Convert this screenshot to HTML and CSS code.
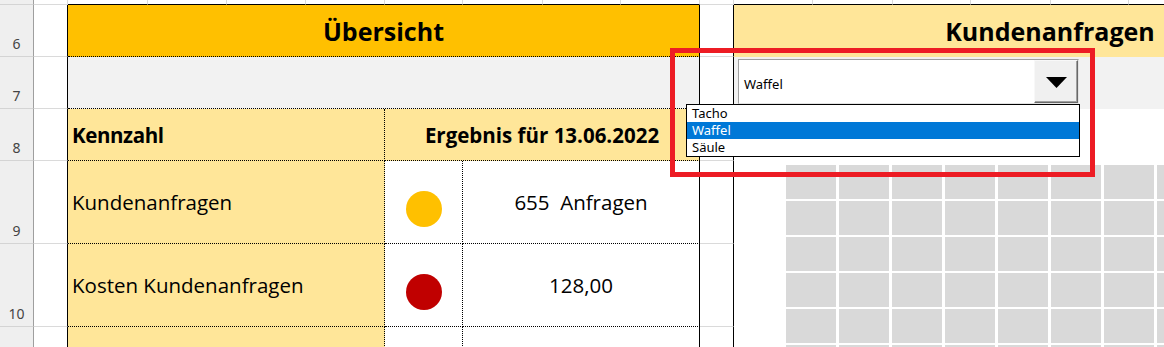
FILE: index.html
```html
<!DOCTYPE html>
<html lang="de">

<head>
    <meta charset="utf-8">
    <title>Übersicht</title>
    <link rel="stylesheet" href="styles.css">
</head>

<body>
    <div class="sheet">
        <!-- row 5 (cut off) -->
        <div class="rh"></div>
        <div class="cell"></div>
        <div class="cell edge"></div>
        <div class="cell edge"></div>
        <div class="cell edge"></div>
        <div class="cell edge"></div>
        <div class="cell edge"></div>
        <div class="cell edge"></div>
        <div class="cell edge"></div>
        <div class="cell edge"></div>
        <div class="cell"></div>
        <div class="cell edge"></div>
        <div class="cell edge"></div>
        <div class="cell edge"></div>
        <div class="cell edge"></div>
        <div class="cell edge"></div>
        <div class="cell edge"></div>
        <div class="cell edge"></div>
        <div class="cell edge"></div>

        <!-- row 6 -->
        <div class="rh">6</div>
        <div class="cell gutter"></div>
        <div class="cell title span-8">Übersicht</div>
        <div class="cell gutter"></div>
        <div class="cell panel-title span-8">Kundenanfragen</div>

        <!-- row 7 -->
        <div class="rh">7</div>
        <div class="cell gutter"></div>
        <div class="cell filter span-8"></div>
        <div class="cell gutter"></div>
        <div class="cell panel-filter span-8">
            <div class="combo">
                <div class="combo-value">Waffel</div>
                <div class="combo-btn">
                    <svg width="21" height="11" viewBox="0 0 21 11"><polygon points="0,0 21,0 10.5,11" fill="#000"/></svg>
                </div>
                <ul class="combo-list">
                    <li>Tacho</li>
                    <li class="selected">Waffel</li>
                    <li>Säule</li>
                </ul>
            </div>
        </div>

        <!-- row 8 -->
        <div class="rh">8</div>
        <div class="cell gutter"></div>
        <div class="cell head label span-4">Kennzahl</div>
        <div class="cell head result span-4">Ergebnis für 13.06.2022</div>
        <div class="cell gutter"></div>
        <div class="cell chart span-8">
            <div class="waffle" id="waffle"></div>
        </div>

        <!-- row 9 -->
        <div class="rh">9</div>
        <div class="cell gutter"></div>
        <div class="cell label span-4">Kundenanfragen</div>
        <div class="cell light"><span class="dot yellow"></span></div>
        <div class="cell value span-3">655  Anfragen</div>
        <div class="cell gutter"></div>

        <!-- row 10 -->
        <div class="rh">10</div>
        <div class="cell gutter"></div>
        <div class="cell label span-4">Kosten Kundenanfragen</div>
        <div class="cell light"><span class="dot red"></span></div>
        <div class="cell value span-3">128,00</div>
        <div class="cell gutter"></div>

        <!-- row 11 (cut off, number below the edge) -->
        <div class="rh"></div>
        <div class="cell gutter"></div>
        <div class="cell label span-4"></div>
        <div class="cell light"></div>
        <div class="cell value span-3"></div>
        <div class="cell gutter"></div>

        <div class="annotation"></div>
    </div>

    <script>
        const waffle = document.getElementById('waffle');
        for (let i = 0; i < 100; i++) {
            const box = document.createElement('div');
            box.className = 'waffle-box';
            waffle.appendChild(box);
        }
    </script>
</body>

</html>
```

FILE: styles.css
```css
* {
    margin: 0;
    padding: 0;
    box-sizing: border-box;
}

html,
body {
    overflow: hidden;
    background: #ffffff;
}

body {
    font-family: 'Open Sans', sans-serif;
    color: #000;
}

.sheet {
    position: relative;
    display: grid;
    grid-template-columns: 34px 34px 80px 79px 79px 79px 78px 80px 78px 79px 34px 79px 80px 78px 80px 78px 79px 79px 79px;
    grid-template-rows: 5px 52px 52px 52px 83px 83px 21px;
    width: 1164px;
    height: 347px;
    overflow: hidden;
}

.rh {
    background: #efefef;
    border-right: 1px solid #9f9f9f;
    border-bottom: 1px solid #d4d4d4;
    display: flex;
    align-items: flex-end;
    justify-content: center;
    padding-bottom: 3px;
    font-family: 'Noto Sans', sans-serif;
    font-size: 14px;
    color: #444;
}

.cell {
    border-right: 1px solid #dadada;
    border-bottom: 1px solid #dadada;
}

.cell.edge {
    border-bottom-color: #000;
}

.cell.gutter {
    border-right-color: #000;
}

.span-3 {
    grid-column: span 3;
}

.span-4 {
    grid-column: span 4;
}

.span-8 {
    grid-column: span 8;
}

.title {
    background: #ffc000;
    border-right-color: #000;
    border-bottom: 1px dotted #000;
    display: flex;
    align-items: center;
    justify-content: center;
    font-size: 25px;
    font-weight: 700;
}

.panel-title {
    background: #ffe699;
    border-right: none;
    border-bottom-color: #ffe699;
    display: flex;
    align-items: center;
    justify-content: center;
    font-size: 25px;
    font-weight: 700;
    white-space: nowrap;
}

.filter {
    background: #f2f2f2;
    border-right-color: #000;
    border-bottom: 1px dotted #000;
}

.panel-filter {
    background: #f2f2f2;
    border-right: none;
    border-bottom-color: #f2f2f2;
    padding: 2px 0 0 4px;
}

.label,
.result,
.value,
.light {
    display: flex;
    align-items: center;
    font-size: 20.5px;
    border-bottom: 1px dotted #000;
}

.label {
    background: #ffe699;
    border-right: 1px dotted #000;
    padding-left: 4px;
}

.head {
    font-weight: 700;
}

.label.head {
    letter-spacing: -0.4px;
}

.result {
    background: #ffe699;
    border-right-color: #000;
    justify-content: center;
}

.light {
    border-right: 1px dotted #000;
    justify-content: center;
}

.value {
    border-right-color: #000;
    justify-content: center;
    white-space: pre;
}

.dot {
    width: 36px;
    height: 36px;
    border-radius: 50%;
    margin-top: 13px;
}

.dot.yellow {
    background: #ffc000;
}

.dot.red {
    background: #c00000;
}

.chart {
    grid-row: span 4;
    border: none;
    background: #fff;
    overflow: hidden;
    padding: 56px 0 0 52px;
}

.waffle {
    display: grid;
    grid-template-columns: repeat(10, 50px);
    grid-auto-rows: 34px;
    column-gap: 3px;
    row-gap: 2px;
}

.waffle-box {
    background: #d9d9d9;
}

/* form control */
.combo {
    position: relative;
    display: flex;
    width: 341px;
    height: 45px;
    background: #fff;
    border: 1px solid;
    border-color: #a0a0a0 #e3e3e3 #e3e3e3 #a0a0a0;
    font-family: 'Noto Sans', sans-serif;
    font-size: 13px;
}

.combo-value {
    flex: 1;
    display: flex;
    align-items: center;
    padding: 4px 0 0 5px;
}

.combo-btn {
    width: 44px;
    background: #f0f0f0;
    border: 1px solid;
    border-color: #f8f8f8 #696969 #696969 #f8f8f8;
    box-shadow: inset -1px -1px 0 #a0a0a0;
    display: flex;
    align-items: center;
    justify-content: center;
    padding-top: 2px;
}

.combo-list {
    position: absolute;
    left: -53px;
    top: 44px;
    width: 394px;
    height: 53px;
    background: #fff;
    border: 1px solid #000;
    list-style: none;
    z-index: 2;
}

.combo-list li {
    height: 17px;
    line-height: 17px;
    padding-left: 5px;
}

.combo-list li.selected {
    background: #0078d7;
    color: #fff;
}

.annotation {
    position: absolute;
    left: 670px;
    top: 48px;
    width: 425px;
    height: 129px;
    border: 5px solid #ed1c24;
    z-index: 3;
}
```
